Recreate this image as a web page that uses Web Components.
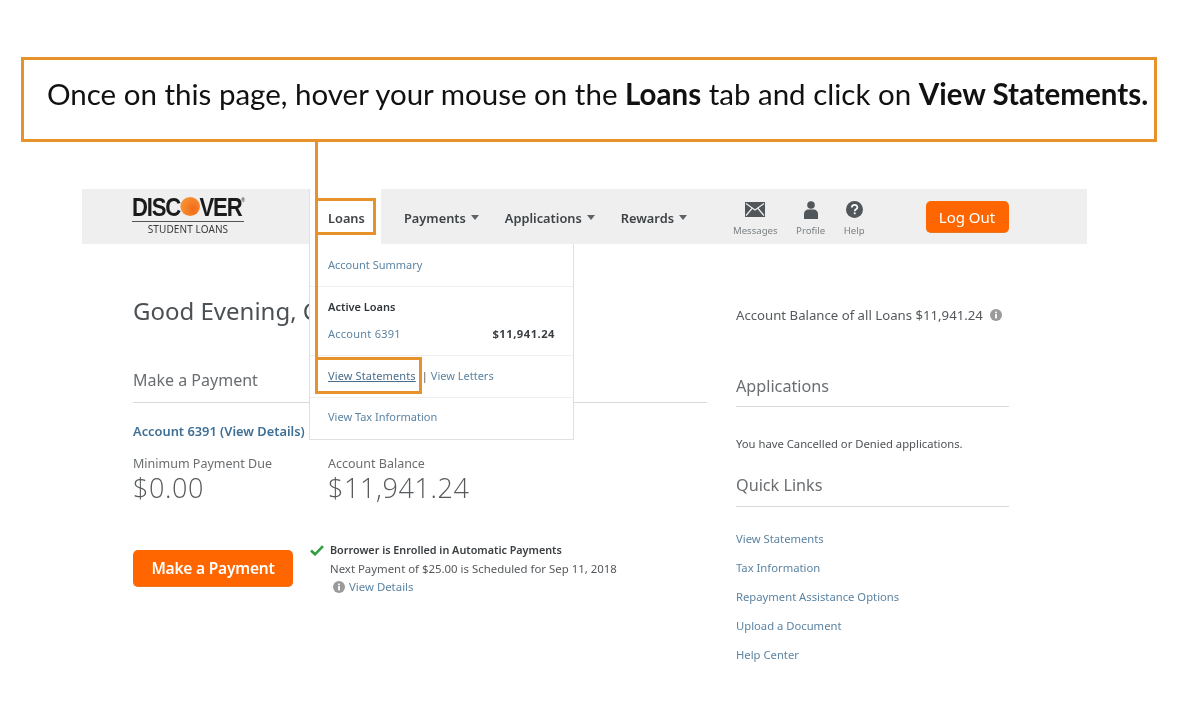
<!DOCTYPE html>
<html lang="en">
<head>
<meta charset="utf-8">
<title>Loans walkthrough</title>
<style>
  html, body { margin: 0; background: #fff; }
  body { position: relative; width: 1180px; height: 706px; overflow: hidden; font-family: "Noto Sans", sans-serif; filter: blur(.35px); }
</style>
</head>
<body>
<callout-banner>Once on this page, hover your mouse on the <b>Loans</b> tab and click on <b>View Statements.</b></callout-banner>
<app-page></app-page>
<loans-menu></loans-menu>
<mark-box style="left:315px;top:141px;width:3px;height:218px;--bw:0;background:#e8922b"></mark-box>
<mark-box style="left:315px;top:198px;width:55px;height:31px"></mark-box>
<mark-box style="left:315px;top:357px;width:101px;height:31px"></mark-box>

<script>
// small helper so every element gets its shadow root the same way
class Base extends HTMLElement {
  constructor() {
    super();
    this.attachShadow({ mode: "open" });
  }
  connectedCallback() {
    this.shadowRoot.innerHTML = this.render();
  }
}

const INFO = `<svg width="12" height="12" viewBox="0 0 12 12"><circle cx="6" cy="6" r="6" fill="#9a9a9a"/><rect x="5.1" y="5" width="1.8" height="4.4" fill="#fff"/><rect x="5.1" y="2.6" width="1.8" height="1.6" fill="#fff"/></svg>`;

class CalloutBanner extends Base {
  render() {
    return `<style>
      :host { display: block; box-sizing: border-box; width: 1136px; height: 85px; margin: 57px 0 0 21px;
        border: 3px solid #e8922b; font-family: Lato, sans-serif; font-size: 29.5px; color: #111; }
      div { padding: 16px 0 0 23px; white-space: nowrap; }
    </style><div><slot></slot></div>`;
  }
}

class MarkBox extends Base {
  render() {
    return `<style>
      :host { display: block; position: absolute; border: var(--bw, 3px) solid #e8922b; }
    </style>`;
  }
}

class NavItem extends Base {
  render() {
    const caret = this.hasAttribute("caret");
    return `<style>
      :host { display: flex; align-items: center; gap: 5px; font-size: 12.8px; font-weight: 600; color: #3d4347; white-space: nowrap; }
      i { width: 0; height: 0; border: 4.5px solid transparent; border-top: 5px solid #5d6367; border-bottom: 0; }
    </style><slot></slot>${caret ? "<i></i>" : ""}`;
  }
}

class UtilIcon extends Base {
  render() {
    return `<style>
      :host { display: flex; flex-direction: column; align-items: center; font-size: 9.6px; line-height: 14px; color: #7b8084; }
      .ic { height: 21px; display: flex; align-items: center; margin-bottom: 4px; }
    </style><div class="ic"><slot name="icon"></slot></div><slot></slot>`;
  }
}

class AppHeader extends Base {
  render() {
    return `<style>
      :host { display: flex; height: 55px; }
      .logo { width: 227px; background: #efefef; display: flex; flex-direction: column; align-items: center; padding: 5px 15px 0 0; box-sizing: border-box; }
      .word { height: 26px; font: 700 26px/26px "Liberation Sans", sans-serif; letter-spacing: -1.4px; color: #1b1b1b; white-space: nowrap; transform: scaleX(.85); }
      .word span { display: inline-block; width: 23px; height: 19px; font-size: 16px; line-height: 19px; text-align: center; border-radius: 50%; color: transparent; background: radial-gradient(circle at 65% 65%, #f26a1b, #f9a13a); vertical-align: 4px; margin: 0; }
      .word sup { font-size: 5px; line-height: 0; vertical-align: 14px; letter-spacing: 0; }
      .rule { width: 112px; height: 1px; background: #555; margin: 1px 0 1px; }
      .sub { font-size: 10px; line-height: 13px; color: #3a3a3a; letter-spacing: .1px; }
      .tab { width: 72px; padding: 2px 0 0 18px; box-sizing: border-box; display: flex; align-items: center; border-left: 1px solid #e2e2e2; }
      .bar { flex: 1; background: #efefef; display: flex; align-items: center; padding-left: 23px; }
      .items { display: flex; gap: 26px; width: 329px; margin-top: 2px; }
      .tools { display: flex; gap: 18.5px; margin-top: 4px; }
      svg { display: block; }
      .logout { margin: 1px 0 0 61px; width: 83px; height: 32px; background: #ff6600; border-radius: 5px; border-bottom: 1px solid #e8761f; box-sizing: border-box; color: #fff; font-size: 15px; display: flex; align-items: center; justify-content: center; }
    </style>
    <div class="logo">
      <div class="word">DISC<span>O</span>VER<sup>&reg;</sup></div>
      <div class="rule"></div>
      <div class="sub">STUDENT LOANS</div>
    </div>
    <div class="tab"><nav-item>Loans</nav-item></div>
    <div class="bar">
      <div class="items">
        <nav-item caret>Payments</nav-item>
        <nav-item caret>Applications</nav-item>
        <nav-item caret>Rewards</nav-item>
      </div>
      <div class="tools">
        <util-icon><svg slot="icon" width="20" height="15" viewBox="0 0 20 15"><rect width="20" height="15" fill="#50565a"/><path d="M1 1.500 10 8l9-6.500M1 13.500 7 6.500M19 13.500 13 6.500" fill="none" stroke="#efefef" stroke-width="1.200"/></svg>Messages</util-icon>
        <util-icon><svg slot="icon" width="14" height="18" viewBox="0 0 14 18"><circle cx="7" cy="4" r="3.800" fill="#50565a"/><path d="M0 18v-5c0-3 2.500-4.500 4-4.500h6c1.500 0 4 1.500 4 4.500v5z" fill="#50565a"/></svg>Profile</util-icon>
        <util-icon><svg slot="icon" width="17" height="17" viewBox="0 0 17 17"><circle cx="8.500" cy="8.500" r="8.500" fill="#50565a"/><path d="M5.800 6.500c0-3.400 5.600-3.400 5.600-.2 0 2-2.700 2-2.700 3.900" fill="none" stroke="#fff" stroke-width="1.700"/><rect x="7.800" y="11.400" width="1.800" height="1.800" fill="#fff"/></svg>Help</util-icon>
      </div>
      <div class="logout">Log Out</div>
    </div>`;
  }
}

class LoansMenu extends Base {
  render() {
    return `<style>
      :host { display: block; position: absolute; left: 309px; top: 244px; width: 265px; height: 196px; box-sizing: border-box;
        background: #fff; border: 1px solid #e0e0e0; border-top: 0; font-size: 11px; color: #5c84a3; }
      .row { padding: 0 18px; border-bottom: 1px solid #efefef; display: flex; align-items: center; box-sizing: border-box; }
      .row:last-child { border-bottom: 0; }
      .one { height: 43px; padding-bottom: 1px; }
      .two { height: 69px; display: block; padding-top: 12px; }
      .two strong { display: block; color: #30363a; font-weight: 600; margin-bottom: 11px; line-height: 16px; }
      .acct { display: flex; justify-content: space-between; line-height: 16px; }
      .acct span { letter-spacing: .25px; }
      .acct b { color: #3a4044; font-weight: 700; font-size: 11.200px; letter-spacing: .5px; }
      .three { height: 42px; padding-bottom: 2px; }
      .three u { color: #4a6e8c; letter-spacing: .13px; }
      .three em { font-style: normal; color: #555; margin: 0 3px 0 6px; }
      .four { height: 41px; padding-bottom: 4px; }
    </style>
    <div class="row one">Account Summary</div>
    <div class="row two"><strong>Active Loans</strong><div class="acct"><span>Account 6391</span><b>$11,941.24</b></div></div>
    <div class="row three"><u>View Statements</u><em>|</em>View Letters</div>
    <div class="row four">View Tax Information</div>`;
  }
}

class PaymentColumn extends Base {
  render() {
    return `<style>
      :host { display: block; width: 574px; color: #55595c; }
      h1 { font-size: 24px; font-weight: 400; color: #4b5054; margin: 0; height: 33px; line-height: 33px; white-space: nowrap; }
      h2 { font-size: 16px; font-weight: 400; color: #6a6e71; margin: 41px 0 0; height: 34px; line-height: 24px; border-bottom: 1px solid #d9d9d9; }
      .acct { font-size: 12.850px; font-weight: 600; color: #3f6f95; margin-top: 19px; line-height: 18px; white-space: nowrap; }
      .figs { display: flex; margin-top: 15px; }
      .fig { font-size: 12.500px; line-height: 18px; color: #6a6e71; white-space: nowrap; }
      .fig:first-child { width: 195px; }
      .fig div { font-size: 27px; line-height: 30px; letter-spacing: .6px; color: #565a5d; font-family: "Open Sans", sans-serif; font-weight: 300; }
      .pay { display: flex; margin-top: 37px; }
      .btn { width: 160px; height: 37px; margin-top: 10px; background: #ff6600; border-radius: 5px; box-sizing: border-box; border-bottom: 1px solid #e8761f; color: #fff; font-weight: 600; font-size: 15.500px; display: flex; align-items: center; justify-content: center; letter-spacing: -.2px; }
      .auto { margin: 1px 0 0 17px; font-size: 11.400px; line-height: 18.500px; white-space: nowrap; }
      .auto b { font-weight: 600; font-size: 10.800px; color: #3a3e41; }
      .line { display: flex; align-items: center; gap: 6px; }
      .rest { padding-left: 20px; }
      .det { display: flex; align-items: center; gap: 4px; color: #5c84a3; padding-left: 23px; }
      svg { display: block; }
    </style>
    <h1>Good Evening, C</h1>
    <h2>Make a Payment</h2>
    <div class="acct">Account 6391 (View Details)</div>
    <div class="figs">
      <div class="fig">Minimum Payment Due<div>$0.00</div></div>
      <div class="fig">Account Balance<div>$11,941.24</div></div>
    </div>
    <div class="pay">
      <div class="btn">Make a Payment</div>
      <div class="auto">
        <div class="line"><svg width="14" height="11" viewBox="0 0 14 11"><path d="M1 5.500 5 9.300 13 1.200" fill="none" stroke="#2e9e3f" stroke-width="2.600"/></svg><b>Borrower is Enrolled in Automatic Payments</b></div>
        <div class="rest">Next Payment of $25.00 is Scheduled for Sep 11, 2018</div>
        <div class="det">${INFO}View Details</div>
      </div>
    </div>`;
  }
}

class SideColumn extends Base {
  render() {
    return `<style>
      :host { display: block; width: 273px; margin-left: 29px; color: #55595c; font-size: 11.250px; }
      .bal { display: flex; align-items: center; gap: 7px; font-size: 13.200px; height: 18px; margin-top: 12px; white-space: nowrap; }
      h2 { font-size: 16.200px; font-weight: 400; color: #6a6e71; margin: 0; line-height: 24px; border-bottom: 1px solid #d9d9d9; }
      .apps { margin-top: 50px; padding-bottom: 8px; }
      p { margin: 29px 0 0; line-height: 16px; color: #4f5356; }
      .ql { margin-top: 21px; padding-bottom: 9px; }
      ul { list-style: none; margin: 23px 0 0; padding: 0; color: #5c84a3; }
      li { height: 29px; line-height: 18px; }
      svg { display: block; }
    </style>
    <div class="bal">Account Balance of all Loans $11,941.24 ${INFO}</div>
    <h2 class="apps">Applications</h2>
    <p>You have Cancelled or Denied applications.</p>
    <h2 class="ql">Quick Links</h2>
    <ul>
      <li>View Statements</li>
      <li>Tax Information</li>
      <li>Repayment Assistance Options</li>
      <li>Upload a Document</li>
      <li>Help Center</li>
    </ul>`;
  }
}

class AppPage extends Base {
  render() {
    return `<style>
      :host { display: block; width: 1005px; margin: 47px 0 0 82px; }
      main { display: flex; padding: 50px 0 0 51px; }
    </style>
    <app-header></app-header>
    <main><payment-column></payment-column><side-column></side-column></main>`;
  }
}

customElements.define("callout-banner", CalloutBanner);
customElements.define("mark-box", MarkBox);
customElements.define("nav-item", NavItem);
customElements.define("util-icon", UtilIcon);
customElements.define("app-header", AppHeader);
customElements.define("loans-menu", LoansMenu);
customElements.define("payment-column", PaymentColumn);
customElements.define("side-column", SideColumn);
customElements.define("app-page", AppPage);
</script>
</body>
</html>
